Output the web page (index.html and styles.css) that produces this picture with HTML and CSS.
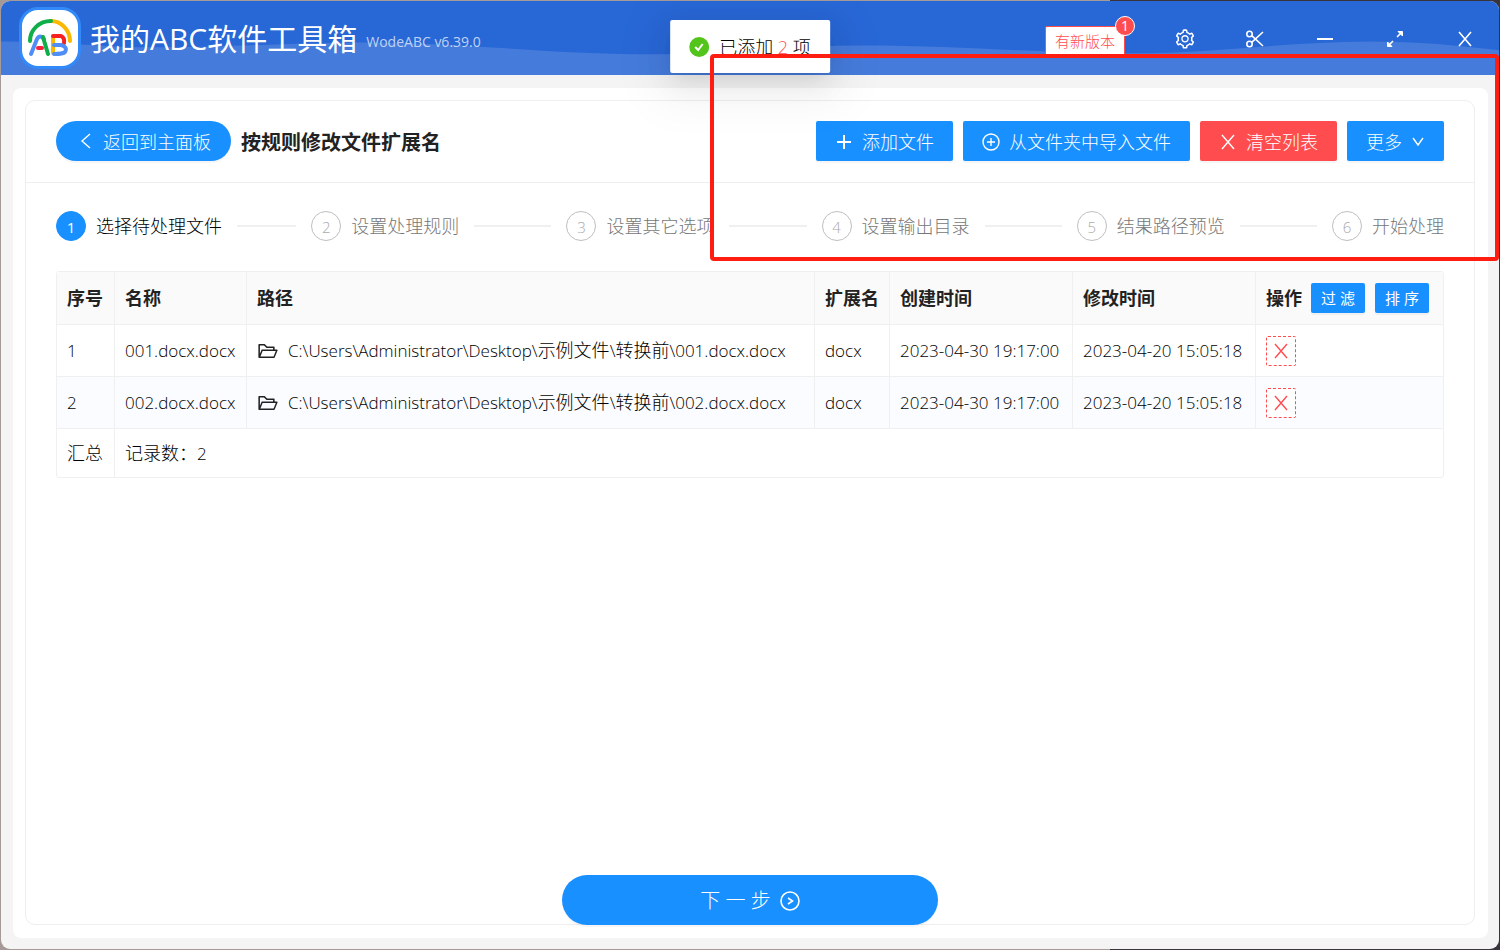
FILE: index.html
```html
<!DOCTYPE html>
<html lang="zh-CN">
<head>
<meta charset="utf-8">
<title>我的ABC软件工具箱</title>
<link rel="stylesheet" href="styles.css">
</head>
<body>
<svg class="sprite" aria-hidden="true">
  <symbol id="i-close" viewBox="0 0 18 18"><path d="M3 2l12 14M15 2L3 16"/></symbol>
  <symbol id="i-folder" viewBox="0 0 1024 1024"><path d="M928 444H820V330.4c0-17.7-14.3-32-32-32H473L355.7 186.2a8.15 8.15 0 00-5.5-2.2H96c-17.7 0-32 14.3-32 32v592c0 17.7 14.3 32 32 32h698c13 0 24.8-7.9 29.7-20l134-332c1.5-3.8 2.3-7.9 2.3-12 0-17.7-14.3-32-32-32zM136 256h188.5l119.6 114.4H748V444H238c-13 0-24.8 7.9-29.7 20L136 643.2V256zm635.3 512H159l103.3-256h612.4L771.3 768z"/></symbol>
</svg>
<div class="window">
  <header class="titlebar">
    <svg class="wave" viewBox="0 0 1500 75" preserveAspectRatio="none" aria-hidden="true">
      <path d="M0 41C50 41 90 46 150 47C230 47 290 42 370 42C460 42 550 54 650 54C730 54 780 45 865 45C960 45 1040 53 1130 53C1220 53 1290 41 1370 41C1420 41 1460 45 1500 50V75H0Z"/>
    </svg>
    <div class="logo">
      <svg viewBox="0 0 56 56" aria-hidden="true">
        <g fill="none" stroke-width="4" stroke-linecap="round" stroke-linejoin="round">
          <path d="M29 11C39 11 48 20 48 31" stroke="#fbb800"/>
          <path d="M8 31C8 20 17 11 29 11" stroke="#0fae48"/>
          <path d="M9 44L15 29Q18 24 22 29" stroke="#4f8df7"/>
          <path d="M21 27L26 44" stroke="#0fae48"/>
          <path d="M16 38H20" stroke="#f8203c"/>
          <path d="M31 27V43" stroke="#fbb800"/>
          <path d="M31 26H39Q43 28 42 33" stroke="#f8201f"/>
          <path d="M32 35H39Q46 37 43 42Q41 44 32 44" stroke="#4f8df7"/>
        </g>
      </svg>
    </div>
    <h1 class="app-name">我的ABC软件工具箱</h1>
    <span class="version">WodeABC v6.39.0</span>
    <button class="update" type="button">有新版本<span class="badge">1</span></button>
    <nav class="controls" aria-label="窗口">
      <button type="button" aria-label="设置"><svg class="gear" viewBox="0 0 1024 1024"><path d="M924.8 625.7l-65.5-56c3.1-19 4.7-38.4 4.7-57.8s-1.6-38.8-4.7-57.8l65.5-56a32.03 32.03 0 009.3-35.2l-.9-2.6a443.74 443.74 0 00-79.7-137.9l-1.8-2.1a32.12 32.12 0 00-35.1-9.5l-81.3 28.9c-30-24.6-63.5-44-99.7-57.6l-15.7-85a32.05 32.05 0 00-25.8-25.7l-2.7-.5c-52.1-9.4-106.9-9.4-159 0l-2.7.5a32.05 32.05 0 00-25.8 25.7l-15.8 85.4a351.86 351.86 0 00-99 57.4l-81.9-29.1a32 32 0 00-35.1 9.5l-1.8 2.1a446.02 446.02 0 00-79.7 137.9l-.9 2.6c-4.5 12.5-.8 26.5 9.3 35.2l66.3 56.6c-3.1 18.8-4.6 38-4.6 57.1 0 19.2 1.5 38.4 4.6 57.1L99 625.5a32.03 32.03 0 00-9.3 35.2l.9 2.6c18.1 50.4 44.9 96.9 79.7 137.9l1.8 2.1a32.12 32.12 0 0035.1 9.5l81.9-29.1c29.8 24.5 63.1 43.9 99 57.4l15.8 85.4a32.05 32.05 0 0025.8 25.7l2.7.5a449.4 449.4 0 00159 0l2.7-.5a32.05 32.05 0 0025.8-25.7l15.7-85a350 350 0 0099.7-57.6l81.3 28.9a32 32 0 0035.1-9.5l1.8-2.1c34.8-41.1 61.6-87.5 79.7-137.9l.9-2.6c4.5-12.3.8-26.3-9.3-35zM788.3 465.9c2.5 15.1 3.8 30.6 3.8 46.1s-1.3 31-3.8 46.1l-6.6 40.1 74.7 63.9a370.03 370.03 0 01-42.6 73.6L721 702.8l-31.4 25.8c-23.9 19.6-50.5 35-79.3 45.8l-38.1 14.3-17.9 97a377.5 377.5 0 01-85 0l-17.9-97.2-37.8-14.5c-28.5-10.8-55-26.2-78.7-45.7l-31.4-25.9-93.4 33.2c-17-22.9-31.2-47.6-42.6-73.6l75.5-64.5-6.5-40c-2.4-14.9-3.7-30.3-3.7-45.5 0-15.3 1.2-30.6 3.7-45.5l6.5-40-75.5-64.5c11.3-26.1 25.6-50.7 42.6-73.6l93.4 33.2 31.4-25.9c23.7-19.5 50.2-34.9 78.7-45.7l37.9-14.3 17.9-97.2c28.1-3.2 56.8-3.2 85 0l17.9 97 38.1 14.3c28.7 10.8 55.4 26.2 79.3 45.8l31.4 25.8 92.8-32.9c17 22.9 31.2 47.6 42.6 73.6L781.8 426l6.5 39.9zM512 326c-97.2 0-176 78.8-176 176s78.8 176 176 176 176-78.8 176-176-78.8-176-176-176zm79.2 255.2A111.6 111.6 0 01512 614c-29.9 0-58-11.7-79.2-32.8A111.6 111.6 0 01400 502c0-29.9 11.7-58 32.8-79.2C454 401.6 482.1 390 512 390c29.9 0 58 11.6 79.2 32.8A111.6 111.6 0 01624 502c0 29.9-11.7 58-32.8 79.2z"/></svg></button>
      <button type="button" aria-label="截图"><svg class="line" viewBox="0 0 20 20"><circle cx="4.5" cy="5" r="2.7"/><circle cx="4.5" cy="15" r="2.7"/><path d="M6.7 6.6L18 17M6.7 13.4L18 3"/></svg></button>
      <button type="button" aria-label="最小化"><svg class="line bold" viewBox="0 0 20 20"><path d="M2 10H18"/></svg></button>
      <button type="button" aria-label="最大化"><svg class="line" viewBox="0 0 20 20"><path d="M3 17L8 12M12 8L17 3"/><path class="solid" d="M13 2.5H17.5V7ZM7 17.5H2.5V13Z"/></svg></button>
      <button type="button" aria-label="关闭"><svg class="line" viewBox="0 0 20 20"><path d="M4 3L16 17M16 3L4 17"/></svg></button>
    </nav>
  </header>
  <div class="shell">
    <main class="card">
      <section class="panel">
        <div class="toolbar">
          <button class="btn back" type="button"><svg class="icon" viewBox="0 0 18 18"><path d="M14 1L6 8L14 15"/></svg>返回到主面板</button>
          <h2 class="page-title">按规则修改文件扩展名</h2>
          <div class="actions">
            <button class="btn" type="button"><svg class="icon plus" viewBox="0 0 18 18"><path d="M9 2V16M2 9H16"/></svg>添加文件</button>
            <button class="btn" type="button"><svg class="icon" viewBox="0 0 18 18"><circle cx="9" cy="9" r="8"/><path d="M9 5V13M5 9H13"/></svg>从文件夹中导入文件</button>
            <button class="btn danger" type="button"><svg class="icon"><use href="#i-close"/></svg>清空列表</button>
            <button class="btn" type="button">更多<svg class="icon small" viewBox="0 0 14 14"><path d="M2 3L7 10L12 3"/></svg></button>
          </div>
        </div>
        <div class="content">
          <ol class="steps">
            <li class="step active"><span class="num">1</span>选择待处理文件</li>
            <li class="step"><span class="num">2</span>设置处理规则</li>
            <li class="step"><span class="num">3</span>设置其它选项</li>
            <li class="step"><span class="num">4</span>设置输出目录</li>
            <li class="step"><span class="num">5</span>结果路径预览</li>
            <li class="step"><span class="num">6</span>开始处理</li>
          </ol>
          <table class="files">
            <colgroup><col class="c-no"><col class="c-name"><col><col class="c-ext"><col class="c-time"><col class="c-time"><col class="c-ops"></colgroup>
            <thead>
              <tr><th>序号</th><th>名称</th><th>路径</th><th>扩展名</th><th>创建时间</th><th>修改时间</th>
                <th><div class="ops">操作<button class="mini" type="button">过 滤</button><button class="mini" type="button">排 序</button></div></th></tr>
            </thead>
            <tbody>
              <tr><td>1</td><td>001.docx.docx</td><td><div class="path"><svg class="folder"><use href="#i-folder"/></svg><span>C:\Users\Administrator\Desktop\<span class="han">示例文件</span>\<span class="han">转换前</span>\001.docx.docx</span></div></td><td>docx</td><td>2023-04-30 19:17:00</td><td>2023-04-20 15:05:18</td><td><button class="remove" type="button" aria-label="移除"><svg class="icon"><use href="#i-close"/></svg></button></td></tr>
              <tr><td>2</td><td>002.docx.docx</td><td><div class="path"><svg class="folder"><use href="#i-folder"/></svg><span>C:\Users\Administrator\Desktop\<span class="han">示例文件</span>\<span class="han">转换前</span>\002.docx.docx</span></div></td><td>docx</td><td>2023-04-30 19:17:00</td><td>2023-04-20 15:05:18</td><td><button class="remove" type="button" aria-label="移除"><svg class="icon"><use href="#i-close"/></svg></button></td></tr>
            </tbody>
            <tfoot><tr><td><span class="han">汇总</span></td><td colspan="6"><span class="han">记录数：</span>2</td></tr></tfoot>
          </table>
        </div>
        <button class="btn next" type="button">下 一 步<svg class="icon" viewBox="0 0 20 20"><circle cx="10" cy="10" r="9"/><path d="M8 7L12.500 10L8 13"/></svg></button>
      </section>
    </main>
  </div>
  <div class="toast" role="status"><svg viewBox="0 0 20 20" aria-hidden="true"><circle cx="10" cy="10" r="10"/><path d="M6 10L9 13L13.500 7"/></svg><span>已添加 <em>2</em> 项</span></div>
  <div class="marker"></div>
</div>
</body>
</html>
```
FILE: styles.css
```css
* { box-sizing: border-box; }

body {
  margin: 0;
  min-height: 100vh;
  display: flex;
  padding: 1px;
  background: linear-gradient(90deg, #a59a98 74%, #39343c 74%);
  color: #000;
  font: 300 18px/28px "Open Sans", "Noto Sans CJK SC", sans-serif;
}

h1, h2, ol { margin: 0; padding: 0; }
button { font: inherit; cursor: pointer; border: 0; padding: 0; }
svg { flex: none; display: block; }
.sprite { position: absolute; width: 0; height: 0; }

.window {
  position: relative;
  flex: 1;
  display: flex;
  flex-direction: column;
  border-radius: 9px;
  background: #f4f4f4;
}

.titlebar {
  position: relative;
  height: 74px;
  display: flex;
  align-items: center;
  padding-left: 18px;
  background: #2867d6;
  border-radius: 9px 9px 0 0;
  color: #fff;
}

.wave { position: absolute; inset: 0; width: 100%; height: 100%; }
.wave path { fill: #457bdb; }

.logo {
  position: relative;
  width: 62px;
  height: 62px;
  border: 3px solid #3189fa;
  border-radius: 19px;
  background: #fff;
}
.logo svg { width: 56px; height: 56px; }

.app-name {
  position: relative;
  margin: 2px 0 0 9px;
  font-size: 30px;
  font-weight: 400;
  line-height: 40px;
}

.version {
  position: relative;
  margin: 8px 0 0 9px;
  font-size: 14px;
  font-weight: 400;
  line-height: 20px;
  color: #c0d3f4;
}

.update {
  position: relative;
  width: 80px;
  height: 30px;
  margin: 6px 25px 0 auto;
  border: 1px solid #ff4d4f;
  border-radius: 2px;
  background: #fff;
  color: #ff4d4f;
  font-size: 15px;
  line-height: 26px;
}

.badge {
  position: absolute;
  top: -11px;
  right: -11px;
  width: 20px;
  height: 20px;
  border: 1px solid #fff;
  border-radius: 10px;
  background: #ff4d4f;
  color: #fff;
  font-size: 14px;
  font-weight: 400;
  line-height: 18px;
}

.controls { position: relative; display: flex; margin: 2px -1px 0 0; }
.controls button {
  width: 70px;
  height: 40px;
  display: grid;
  place-items: center;
  background: none;
}
.controls svg { width: 20px; height: 20px; fill: #fff; }
.controls .gear { width: 22px; height: 22px; }
.controls .line { fill: none; stroke: #fff; stroke-width: 1.6; }
.controls .bold { stroke-width: 2; }
.controls .solid { fill: #fff; stroke-width: 1; }

.shell { flex: 1; display: flex; padding: 13px 11px 11px 12px; }
.card { flex: 1; display: flex; padding: 12px 13px 13px 12px; border-radius: 8px; background: #fff; }
.panel {
  flex: 1;
  min-width: 0;
  display: flex;
  flex-direction: column;
  border: 1px solid #eee;
  border-radius: 10px;
}

.toolbar {
  display: flex;
  align-items: center;
  gap: 10px;
  padding: 20px 30px 21px;
  border-bottom: 1px solid #eee;
}
.page-title { padding-top: 4px; font-size: 20px; font-weight: 700; line-height: 36px; color: #222; }
.actions { display: flex; gap: 10px; margin-left: auto; }

.btn {
  display: flex;
  align-items: center;
  justify-content: center;
  gap: 9px;
  height: 40px;
  padding: 2px 19px 0;
  border-radius: 2px;
  background: #1890ff;
  box-shadow: 0 2px 0 rgba(0, 0, 0, .04);
  color: #fff;
  white-space: nowrap;
}
.icon { width: 18px; height: 18px; fill: none; stroke: currentColor; stroke-width: 1.4; }
.icon.small { width: 14px; height: 14px; }
.icon.plus { stroke-width: 2; }
.back { padding: 2px 20px 0; border-radius: 20px; }
.danger { background: #ff4d4f; }

.content { padding: 28px 30px 20px; }

.steps { display: flex; list-style: none; }
.step {
  flex: 1;
  display: flex;
  align-items: center;
  height: 30px;
  white-space: nowrap;
  color: #777;
}
.step::after {
  content: "";
  flex: 1;
  height: 2px;
  margin: 0 15px;
  background: #f0f0f0;
}
.step:last-child { flex: none; }
.step:last-child::after { display: none; }
.num {
  width: 30px;
  height: 30px;
  margin-right: 10px;
  border: 1px solid #bfbfbf;
  border-radius: 15px;
  color: #aaa;
  font-size: 15px;
  line-height: 30px;
  text-align: center;
}
.active { color: #000; }
.active .num { background: #1890ff; border-color: #1890ff; color: #fff; font-weight: 400; }

.files {
  width: 100%;
  margin-top: 30px;
  table-layout: fixed;
  border: 1px solid #f0f0f0;
  border-spacing: 0;
  border-radius: 3px;
}
.c-no { width: 58px; }
.c-name { width: 132px; }
.c-ext { width: 75px; }
.c-time { width: 183px; }
.c-ops { width: 187px; }

.files th, .files td {
  height: 52px;
  padding: 0 10px;
  border-right: 1px solid #f0f0f0;
  border-bottom: 1px solid #f0f0f0;
  text-align: left;
  white-space: nowrap;
}
.files th:last-child, .files td:last-child { border-right: 0; }
.files th { height: 53px; background: #fafafa; font-weight: 700; color: #222; }
.files td { font-size: 17px; }
.files tbody tr:nth-child(even) { background: #fafcff; }
.files tfoot td { height: 48px; border-bottom: 0; }
.han { font-size: 18px; }

.ops { display: flex; align-items: center; gap: 9px; }
.mini {
  width: 54px;
  height: 30px;
  border-radius: 2px;
  background: #1890ff;
  box-shadow: 0 2px 0 rgba(0, 0, 0, .04);
  color: #fff;
  font-size: 15px;
  font-weight: 400;
  line-height: 30px;
}
.mini + .mini { margin-left: 1px; }
.path { display: flex; align-items: center; gap: 9px; }
.folder { width: 22px; height: 22px; fill: #222; }
.remove {
  display: grid;
  place-items: center;
  width: 30px;
  height: 30px;
  border: 1px dashed #ff4d4f;
  border-radius: 2px;
  background: #fff;
  color: #ff4d4f;
}

.next {
  align-self: center;
  width: 26%;
  height: 50px;
  margin: auto 0 -1px;
  border-radius: 25px;
  font-size: 20px;
}
.next .icon { width: 20px; height: 20px; stroke-width: 1.6; }

.toast {
  position: absolute;
  top: 19px;
  left: 50%;
  transform: translateX(-50%);
  display: flex;
  align-items: center;
  gap: 10px;
  height: 53px;
  padding: 0 19px;
  border-radius: 2px;
  background: #fff;
  box-shadow: 0 6px 16px -8px rgba(0, 0, 0, .08), 0 9px 28px rgba(0, 0, 0, .08), 0 12px 48px 16px rgba(0, 0, 0, .05);
  white-space: nowrap;
}
.toast svg { width: 20px; height: 20px; fill: #52c41a; }
.toast path { fill: none; stroke: #fff; stroke-width: 2; }
.toast em { color: #ff4d4f; font-style: normal; }

.marker {
  position: absolute;
  top: 53px;
  right: 0;
  left: 709px;
  height: 207px;
  border: 4px solid #ff1d12;
  border-radius: 4px;
  pointer-events: none;
}
```
